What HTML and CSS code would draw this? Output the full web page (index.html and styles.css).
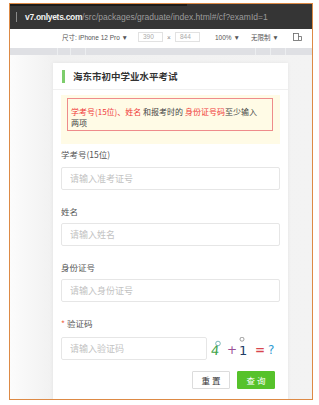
FILE: index.html
```html
<!DOCTYPE html>
<html lang="zh-CN">

<head>
    <meta charset="UTF-8">
    <meta name="viewport" content="width=device-width, initial-scale=1.0">
    <title>海东市初中学业水平考试</title>
    <link rel="stylesheet" href="styles.css">
</head>

<body>
    <div class="frame">
        <div class="addr">
            <div class="tabline"></div>
            <div class="url">
                <span class="caret"></span>
                <span class="host">v7.onlyets.com</span><span class="path">/src/packages/graduate/index.html#/cf?examId=1</span>
            </div>
        </div>
        <div class="devbar">
            <span class="dev">尺寸: iPhone 12 Pro ▼</span>
            <span class="num">390</span>
            <span class="times">×</span>
            <span class="num">844</span>
            <span class="zoom">100% ▼</span>
            <span class="throttle">无限制 ▼</span>
            <svg class="rotate" width="9" height="8" viewBox="0 0 9 8">
                <rect x="0.5" y="0.5" width="5" height="7" fill="none" stroke="#666" stroke-width="0.8" />
                <path d="M5.5 3.5 H8.5 V7.5 H5.5" fill="none" stroke="#666" stroke-width="0.8" />
            </svg>
        </div>
        <div class="ruler">
            <span class="tick" style="left: 47px"></span>
            <span class="tick" style="left: 60px"></span>
            <span class="tick" style="left: 75px"></span>
            <span class="tick" style="left: 245px"></span>
            <span class="tick" style="left: 260px"></span>
            <span class="tick" style="left: 275px"></span>
        </div>
        <div class="viewport">
            <div class="card">
                <div class="card-head">
                    <span class="bar"></span>
                    <span class="title">海东市初中学业水平考试</span>
                </div>
                <div class="card-body">
                    <div class="notice">
                        <div class="notice-inner">
                            <span class="red">学考号(15位)、姓名</span> 和报考时的 <span class="red">身份证号码</span>至少输入<br>两项
                        </div>
                    </div>

                    <div class="label first">学考号(15位)</div>
                    <input class="field" type="text" placeholder="请输入准考证号">

                    <div class="label">姓名</div>
                    <input class="field" type="text" placeholder="请输入姓名">

                    <div class="label">身份证号</div>
                    <input class="field" type="text" placeholder="请输入身份证号">

                    <div class="label"><span class="star">*</span> 验证码</div>
                    <div class="captcha-row">
                        <input class="field captcha-input" type="text" placeholder="请输入验证码">
                        <svg class="captcha" width="66" height="23" viewBox="0 0 66 23">
                            <text x="1.5" y="18" font-size="13" font-family="DejaVu Sans" transform="skewX(-6)" fill="#3fa64c">4</text>
                            <circle cx="7" cy="6.5" r="2.3" fill="none" stroke="#5aa5a8" stroke-width="0.8" />
                            <text x="16" y="17" font-size="12" font-family="DejaVu Sans" fill="#9b4f96">+</text>
                            <text x="28" y="18" font-size="13" font-family="DejaVu Sans" fill="#1f3d66">1</text>
                            <circle cx="31" cy="2.2" r="2" fill="none" stroke="#888" stroke-width="0.8" />
                            <text x="44" y="17" font-size="12" font-family="DejaVu Sans" font-weight="bold" fill="#d8464d">=</text>
                            <text x="57" y="17" font-size="12" font-family="DejaVu Sans" fill="#2f9bd3">?</text>
                        </svg>
                    </div>

                    <div class="actions">
                        <div class="btn reset">重置</div>
                        <div class="btn query">查询</div>
                    </div>
                </div>
            </div>
        </div>
    </div>
</body>

</html>
```

FILE: styles.css
```css
body {
    margin: 0;
    padding: 0;
    background-color: #fff;
    font-family: "Noto Sans CJK SC", "Liberation Sans", sans-serif;
}

.frame {
    display: flex;
    flex-direction: column;
    width: 304px;
    height: 397px;
    margin: 3px 0 0 9px;
    border: 1px solid #dd8a45;
    box-sizing: border-box;
    overflow: hidden;
}

.addr {
    height: 25px;
    background-color: #353535;
}

.tabline {
    width: 177px;
    height: 2px;
    background-color: #1c1c1c;
}

.url {
    display: flex;
    align-items: center;
    height: 22px;
    padding-left: 6px;
    font-family: "Liberation Sans", sans-serif;
    font-size: 8.5px;
    white-space: nowrap;
}

.caret {
    width: 1px;
    height: 10px;
    margin-right: 8px;
    background-color: #8a8a8a;
}

.host {
    color: #f2f2f2;
    font-weight: bold;
    letter-spacing: -0.3px;
}

.path {
    color: #9c9c9c;
}

.devbar {
    display: flex;
    align-items: center;
    height: 16px;
    padding-left: 52px;
    font-family: "Liberation Sans", "Noto Sans CJK SC", sans-serif;
    font-size: 6.5px;
    color: #555;
    white-space: nowrap;
}

.num {
    width: 25px;
    height: 10px;
    padding-left: 4px;
    box-sizing: border-box;
    border: 1px solid #e2e2e2;
    color: #aaa;
    line-height: 8px;
}

.dev {
    width: 76px;
}

.times {
    width: 12px;
    text-align: center;
    color: #888;
}

.zoom {
    margin-left: 15px;
    width: 36px;
}

.throttle {
    width: 42px;
}

.ruler {
    position: relative;
    height: 7px;
    margin-top: 3px;
    background-color: #dfe0e4;
}

.tick {
    position: absolute;
    top: 0;
    width: 1px;
    height: 7px;
    background-color: #eceef0;
}

.viewport {
    flex: 1;
    padding: 8px 0 0 43px;
    background: linear-gradient(90deg, #fcfcfc 0, #f1f1f1 42px, #f3f3f3 100%);
    overflow: hidden;
}

.card {
    width: 235px;
    height: 400px;
    background-color: #fff;
    box-shadow: 0 0 4px rgba(0, 0, 0, 0.06);
}

.card-head {
    display: flex;
    align-items: center;
    height: 26px;
    padding-left: 9px;
    border-bottom: 1px solid #f0f0f0;
}

.bar {
    width: 3px;
    height: 13px;
    margin-right: 8px;
    background-color: #7dcd6c;
}

.title {
    font-size: 9.5px;
    font-weight: bold;
    color: #333;
}

.card-body {
    padding: 0 8px;
}

.notice {
    margin-top: 5px;
    padding: 3px 7px 13px 6px;
    background-color: #fffbe6;
}

.notice-inner {
    padding: 7px 4px 2px 3px;
    border: 1px solid #ee8b8b;
    font-size: 8px;
    line-height: 11px;
    color: #444;
    white-space: nowrap;
}

.red {
    color: #f03a3a;
}

.label {
    margin-top: 15px;
    font-size: 8.5px;
    line-height: 12px;
    color: #555;
}

.label.first {
    margin-top: 4px;
}

.star {
    color: #f06a4a;
}

.field {
    display: block;
    width: 100%;
    height: 23px;
    margin-top: 6px;
    padding: 0 8px;
    box-sizing: border-box;
    border: 1px solid #e6e6e6;
    border-radius: 2px;
    font-family: "Noto Sans CJK SC", sans-serif;
    font-size: 9px;
    color: #333;
    outline: none;
}

.label.first + .field {
    margin-top: 7px;
}

.field::placeholder {
    color: #c2c2c2;
}

.captcha-row {
    display: flex;
    align-items: center;
    margin-top: 8px;
}

.captcha-input {
    width: 146px;
    margin-top: 0;
}

.captcha {
    margin-left: 4px;
}

.actions {
    display: flex;
    justify-content: flex-end;
    gap: 7px;
    margin-top: 11px;
    padding-right: 5px;
}

.btn {
    width: 38px;
    height: 18px;
    box-sizing: border-box;
    font-size: 8.5px;
    line-height: 16px;
    letter-spacing: 2px;
    text-indent: 2px;
    text-align: center;
    border-radius: 1px;
    cursor: pointer;
}

.reset {
    border: 1px solid #dcdcdc;
    background-color: #fff;
    color: #333;
}

.query {
    border: 1px solid #56c22b;
    background-color: #56c22b;
    color: #fff;
}
```
